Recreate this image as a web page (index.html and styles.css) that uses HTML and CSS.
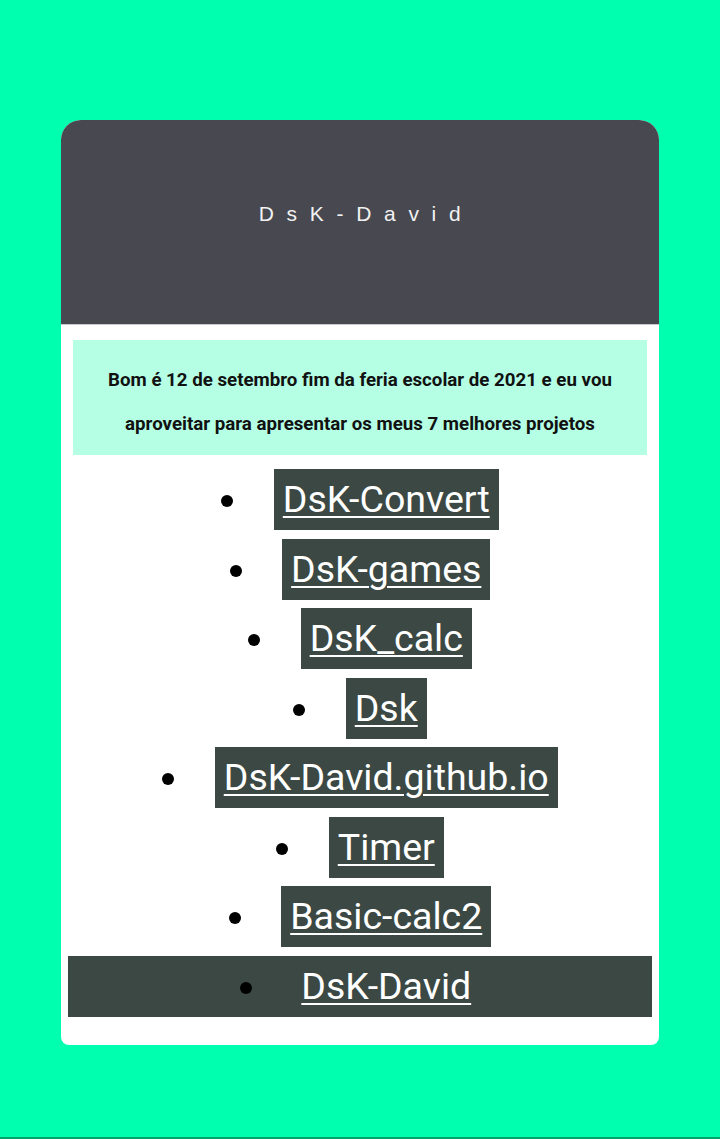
FILE: index.html
```html
<!DOCTYPE html>
<html lang="pt">
<head>
<meta charset="utf-8">
<title>DsK-David</title>
<link rel="stylesheet" href="styles.css">
</head>
<body>
<main class="card">
  <header class="card-header">
    <h1 class="title">DsK-David</h1>
  </header>
  <section class="card-body">
    <p class="intro">Bom é 12 de setembro fim da feria escolar de 2021 e eu vou aproveitar para apresentar os meus 7 melhores projetos</p>
    <ul class="projects">
      <li class="project"><a class="project-link" href="#">DsK-Convert</a></li>
      <li class="project"><a class="project-link" href="#">DsK-games</a></li>
      <li class="project"><a class="project-link" href="#">DsK_calc</a></li>
      <li class="project"><a class="project-link" href="#">Dsk</a></li>
      <li class="project"><a class="project-link" href="#">DsK-David.github.io</a></li>
      <li class="project"><a class="project-link" href="#">Timer</a></li>
      <li class="project"><a class="project-link" href="#">Basic-calc2</a></li>
      <li class="project project-active"><a class="project-link" href="#">DsK-David</a></li>
    </ul>
  </section>
</main>
</body>
</html>
```

FILE: styles.css
```css
html {
  background: #00ffae;
}
body {
  margin: 0;
  min-height: 100vh;
  box-sizing: border-box;
  padding-top: 120px;
  border-bottom: 2px solid #00a468;
  font-family: Roboto, "Liberation Sans", sans-serif;
}
.card {
  width: 598px;
  margin: 0 auto;
  background: #ffffff;
  border-radius: 20px 20px 8px 8px;
  overflow: hidden;
}
.card-header {
  height: 205px;
  background: #474850;
  border-bottom: 1px solid #c9c9d1;
  display: flex;
  align-items: center;
  justify-content: center;
  padding-bottom: 16px;
  box-sizing: border-box;
}
.title {
  margin: 0;
  font-family: "Liberation Sans", Arial, sans-serif;
  font-weight: 400;
  font-size: 21px;
  letter-spacing: 12.7px;
  color: #f2f2f2;
  padding-left: 12px;
}
.card-body {
  padding: 15px 7px 28px;
}
.intro {
  margin: 0 5px;
  background: #b5ffe5;
  padding: 18px 10px 9px;
  text-align: center;
  font-weight: 700;
  font-size: 18.7px;
  line-height: 44px;
  color: #111111;
}
.projects {
  list-style: disc inside;
  margin: 14px 0 0;
  padding: 0;
  text-align: center;
  font-size: 37.5px;
}
.project {
  margin-bottom: 8.5px;
  height: 61px;
}
.project:last-child {
  margin-bottom: 0;
}
.project-active {
  background: #3b4843;
}
.project-link {
  display: inline-block;
  vertical-align: baseline;
  margin-left: 2px;
  padding: 9px 9px 9px;
  background: #3b4843;
  color: #ffffff;
  text-decoration: underline;
  text-underline-offset: 4px;
  text-decoration-thickness: 2px;
  line-height: 43px;
}
```
